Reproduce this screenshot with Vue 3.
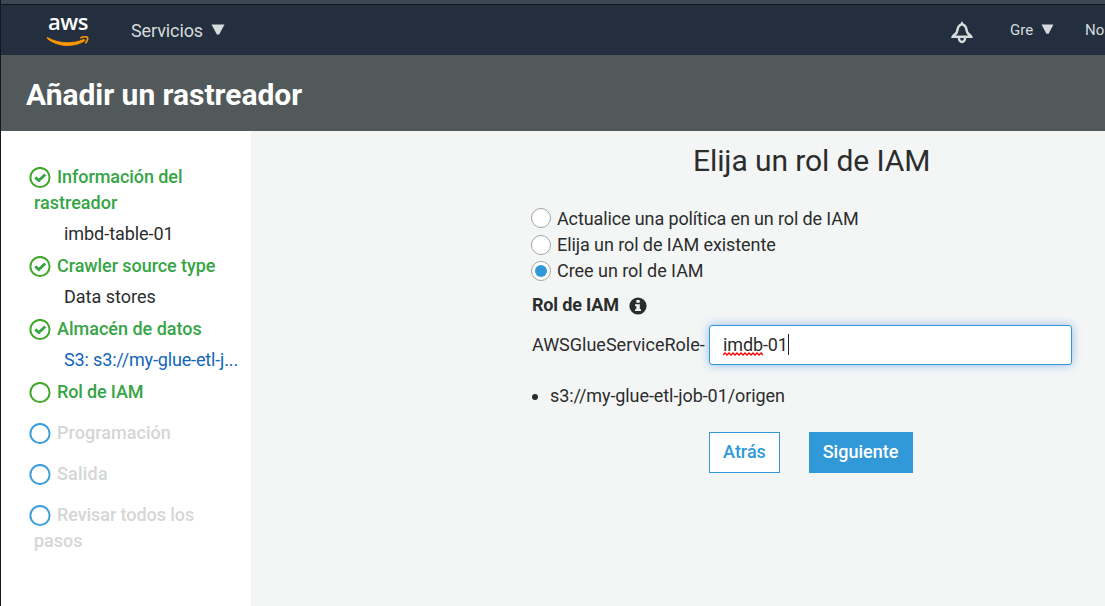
<script setup>
import { ref } from 'vue'

const steps = [
  { lines: ['Información del', 'rastreador'], state: 'done', value: 'imbd-table-01' },
  { lines: ['Crawler source type'], state: 'done', value: 'Data stores' },
  { lines: ['Almacén de datos'], state: 'done', value: 'S3: s3://my-glue-etl-j...', link: true },
  { lines: ['Rol de IAM'], state: 'current' },
  { lines: ['Programación'], state: 'pending' },
  { lines: ['Salida'], state: 'pending' },
  { lines: ['Revisar todos los', 'pasos'], state: 'pending' },
]
const options = [
  'Actualice una política en un rol de IAM',
  'Elija un rol de IAM existente',
  'Cree un rol de IAM',
]
const selected = ref(2)
</script>

<template>
  <div class="page">
    <div class="strip"></div>
    <nav class="nav">
      <div class="logo">
        <span class="logo-text">aws</span>
        <svg class="smile" width="44" height="12" viewBox="0 0 44 12">
          <path d="M1.2 1.4 C12 7.6 27 8.6 38 3.2 L39 4.6 C29 11.6 11 11.2 1.2 2.4 Z" fill="#f90" stroke="#f90" stroke-width="0.8" />
          <path d="M34.3 1.9 C37.5 0.5 40.8 0.6 41.5 1.4 C42 2.8 41 5.6 39.4 7.4" fill="none" stroke="#f90" stroke-width="1.6" />
        </svg>
      </div>
      <span class="services">Servicios</span>
      <svg class="caret" width="14" height="12" viewBox="0 0 14 12"><path d="M0.5 0.5H13.5L8.2 10.5H5.8Z" fill="#d5dbdb" /></svg>
      <svg class="bell" width="24" height="24" viewBox="0 0 24 24" fill="none" stroke="#d5dbdb">
        <path d="M12 2.6 C11.3 3.8 10.1 3.8 9 5 C7.2 7 7.8 9.3 6.6 11.6 C5.5 13.6 3.4 14 2.8 15.7 H21.2 C20.6 14 18.5 13.6 17.4 11.6 C16.2 9.3 16.8 7 15 5 C13.9 3.8 12.7 3.8 12 2.6Z" stroke-width="2.5" />
        <path d="M8.9 16.5 C8.7 22.4 15.3 22.4 15.1 16.5" stroke-width="2.4" />
      </svg>
      <span class="user">Gre</span>
      <svg class="caret user-caret" width="13" height="11" viewBox="0 0 14 12"><path d="M0.5 0.5H13.5L8.2 10.5H5.8Z" fill="#d5dbdb" /></svg>
      <span class="region">No</span>
    </nav>
    <header class="header"><h1>Añadir un rastreador</h1></header>
    <div class="body">
      <aside class="side">
        <div v-for="(s, i) in steps" :key="i" class="step" :class="[s.state, { filled: s.value }]">
          <div class="title">
            <svg class="mark" width="22" height="22" viewBox="0 0 22 22" fill="none">
              <circle cx="11" cy="10.5" r="9.6" class="ring" />
              <path v-if="s.state === 'done'" d="M6.2 10.4 L9.8 13.5 L16.2 7.4" class="check" />
            </svg>
            <span :class="'t' + i">{{ s.lines[0] }}</span>
          </div>
          <div v-if="s.lines[1]" class="title wrap">{{ s.lines[1] }}</div>
          <div v-if="s.value" class="value" :class="['v' + i, { link: s.link }]">{{ s.value }}</div>
        </div>
      </aside>
      <main class="main">
        <h2>Elija un rol de IAM</h2>
        <div class="form">
          <div class="options">
            <div v-for="(o, i) in options" :key="o" class="option" @click="selected = i">
              <span class="radio" :class="['r' + i, { on: selected === i }]"></span>
              <span :class="'o' + i">{{ o }}</span>
            </div>
          </div>
          <div class="label">
            <span>Rol de IAM</span>
            <svg width="18" height="18" viewBox="0 0 18 18">
              <circle cx="9" cy="9" r="8.6" fill="#2b2d2d" />
              <path d="M7.4 3H10.7V5.7H7.4ZM6 7.2H10.8V12.2H12V14.1H6V12.2H7.3V9H6Z" fill="#f4f6f6" />
            </svg>
          </div>
          <div class="field">
            <span class="prefix">AWSGlueServiceRole-</span>
            <div class="input">
              <span class="typed"><span class="typo">imdb<svg class="wave" width="40" height="4" viewBox="0 0 40 4"><path d="M0 3L2 1L4 3L6 1L8 3L10 1L12 3L14 1L16 3L18 1L20 3L22 1L24 3L26 1L28 3L30 1L32 3L34 1L36 3L38 1L40 3" fill="none" stroke="#f00" stroke-width="1.4" /></svg></span>-01</span>
              <i class="cursor"></i>
            </div>
          </div>
          <div class="path"><i></i><span>s3://my-glue-etl-job-01/origen</span></div>
          <div class="buttons">
            <button class="back"><span>Atrás</span></button>
            <button class="next"><span>Siguiente</span></button>
          </div>
        </div>
      </main>
    </div>
  </div>
</template>

<style>
body { margin: 0; overflow: hidden; }
</style>

<style scoped>
.page { width: 1105px; height: 606px; box-sizing: border-box; border-left: 1px solid #14171f; overflow: hidden; display: flex; flex-direction: column; font-family: Roboto, "Liberation Sans", sans-serif; font-size: 18px; color: #2b2d2d; background: #f4f6f6; white-space: nowrap; }
.strip { height: 4px; flex: none; background: #3b4754; border-bottom: 1px solid #10151c; }
.nav { height: 50px; flex: none; background: #232f3e; color: #d5dbdb; display: flex; align-items: flex-start; }
.logo { width: 44px; margin: 3px 0 0 45px; display: flex; flex-direction: column; align-items: center; }
.logo-text { font: 600 22px/26px "Open Sans", "Noto Sans", sans-serif; color: #fff; height: 28px; letter-spacing: -0.5px; }
.smile { display: block; }
.services { width: 72px; margin: 14px 0 0 41px; line-height: 24px; letter-spacing: -0.1px; }
.caret { margin: 19px 0 0 8px; }
.bell { margin: 16px 0 0 725px; }
.user { font-size: 15px; line-height: 20px; width: 24px; margin: 15px 0 0 36px; }
.user-caret { margin-left: 7px; }
.region { font-size: 15px; line-height: 20px; margin: 15px 0 0 31px; }
.header { height: 76px; flex: none; background: #52595a; color: #fff; display: flex; align-items: center; padding-left: 25px; box-sizing: border-box; }
h1 { margin: 0 0 -3px; font-size: 30px; line-height: 40px; font-weight: 700; letter-spacing: -0.03px; }
.body { flex: 1; display: flex; min-height: 0; }
.side { width: 250px; flex: none; box-sizing: border-box; background: #fff; padding: 33px 0 0 28px; }
.step { margin-bottom: 15px; color: #d5d6d6; }
.step.filled { margin-bottom: 6px; }
.done, .current { color: #36a546; }
.title { height: 26px; line-height: 26px; display: flex; align-items: center; font-weight: 500; }
.title.wrap { padding-left: 5px; }
.mark { margin: 2px 6px 0 0; }
.ring { stroke: #3f9fdb; stroke-width: 2; }
.done .ring, .current .ring { stroke: #43a82b; }
.check { stroke: #36a546; stroke-width: 2.8; }
.t0, .t1, .t6 { letter-spacing: -0.07px; }
.t3 { letter-spacing: -0.15px; }
.t4 { letter-spacing: 0.04px; }
.t5 { letter-spacing: 0.2px; }
.value { margin: 5px 0 0 35px; line-height: 26px; height: 26px; color: #2b2d2d; }
.v0 { letter-spacing: -0.05px; }
.value.link { color: #1166bb; letter-spacing: -0.15px; }
.main { flex: 1; min-width: 0; padding-left: 280px; }
h2 { margin: 10px 0 0 162px; font-size: 30px; line-height: 40px; font-weight: 400; letter-spacing: -0.1px; }
.form { width: 541px; }
.options { margin-top: 25px; }
.option { height: 26px; line-height: 26px; display: flex; align-items: center; }
.o0 { letter-spacing: -0.12px; }
.o1 { letter-spacing: -0.08px; }
.o2 { letter-spacing: -0.04px; }
.radio { width: 20px; height: 20px; box-sizing: border-box; border: 1px solid #a2a5a5; border-radius: 50%; background: #fff; margin: 0 6px 0 0; display: flex; align-items: center; justify-content: center; }
.radio.r0 { margin-bottom: 2px; }
.radio.on::after { content: ""; width: 12px; height: 12px; border-radius: 50%; background: #3199d7; }
.label { margin: 8px 0 0 1px; height: 26px; line-height: 26px; font-weight: 700; display: flex; align-items: center; gap: 10px; letter-spacing: -0.18px; }
.label svg { margin-top: 2px; }
.field { margin-top: 7px; display: flex; align-items: center; padding-left: 1px; }
.prefix { width: 177px; margin-bottom: 2px; }
.input { width: 363px; height: 40px; box-sizing: border-box; border: 1px solid #3199d7; border-radius: 3px; background: #fff; box-shadow: 0 0 10px rgba(49, 130, 225, 0.5); display: flex; align-items: center; padding-left: 13px; }
.typed { letter-spacing: -0.12px; margin-bottom: 1px; }
.typo { position: relative; }
.wave { position: absolute; left: 0; bottom: -1px; }
.cursor { width: 1px; height: 21px; background: #222; margin-bottom: 1px; }
.path { margin: 18px 0 0 1px; height: 26px; line-height: 26px; display: flex; align-items: center; letter-spacing: -0.08px; }
.path i { width: 6px; height: 6px; border-radius: 50%; background: #2b2d2d; margin: 2px 12px 0 0; }
.buttons { display: flex; gap: 29px; margin: 23px 0 0 178px; }
button { height: 41px; padding: 0 0 2px; box-sizing: border-box; border: 1px solid #3199d7; font: 500 18px/24px Roboto, sans-serif; color: #3199d7; background: #fff; }
.back { width: 71px; }
.next { width: 104px; padding-right: 1px; color: #fff; background: #3199d7; }
</style>
